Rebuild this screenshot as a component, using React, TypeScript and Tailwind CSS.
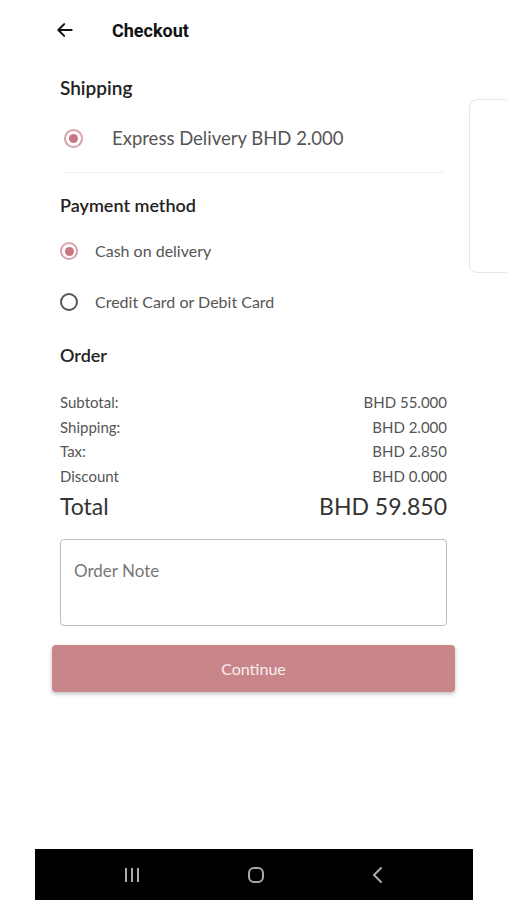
import React from "react";

const body = { fontFamily: "Lato, 'Open Sans', sans-serif" };

function Radio({ checked, size = 18 }: { checked: boolean; size?: number }) {
  return (
    <span
      className={`flex items-center justify-center rounded-full border-2 ${checked ? "border-[#d9a3ab]" : "border-[#555]"}`}
      style={{ width: size, height: size }}
    >
      {checked && <span className="block h-[9px] w-[9px] rounded-full bg-[#c97683]" />}
    </span>
  );
}

function Row({ label, value }: { label: string; value: string }) {
  return (
    <div className="flex h-[24.5px] items-center justify-between text-[15px] text-[#555]">
      <span>{label}</span>
      <span>{value}</span>
    </div>
  );
}

export default function App() {
  return (
    <div className="relative h-[900px] w-[507px] overflow-hidden bg-white" style={body}>
      {/* header */}
      <div className="flex h-[60px] items-center px-[55px]">
        <svg width="20" height="20" viewBox="0 0 24 24" fill="none" stroke="#111" strokeWidth="2.4" strokeLinecap="round" strokeLinejoin="round">
          <path d="M20 12H5M11 5l-7 7 7 7" />
        </svg>
        <span className="ml-[37px] text-[18px] font-bold text-[#111]" style={{ fontFamily: "Roboto, sans-serif" }}>
          Checkout
        </span>
      </div>

      {/* card peeking from the right */}
      <div className="absolute left-[469px] top-[99px] h-[174px] w-[60px] rounded-lg border border-[#e6e6e6] bg-white" />

      <div className="px-[60px]">
        <div className="mt-[14px] text-[19px] font-semibold text-[#222]">Shipping</div>
        <div className="mt-[22px] flex items-center pl-[4px]">
          <Radio checked size={19} />
          <span className="ml-[29px] text-[18.5px] text-[#555]">Express Delivery BHD 2.000</span>
        </div>
        <div className="mt-[20px] ml-[3px] mr-[3px] h-px bg-[#efefef]" />

        <div className="mt-[19px] text-[18px] font-semibold text-[#222]">Payment method</div>
        <div className="mt-[20px] flex items-center">
          <Radio checked />
          <span className="ml-[17px] text-[16px] text-[#555]">Cash on delivery</span>
        </div>
        <div className="mt-[27px] flex items-center">
          <Radio checked={false} />
          <span className="ml-[17px] text-[16px] text-[#555]">Credit Card or Debit Card</span>
        </div>

        <div className="mt-[28px] text-[18px] font-semibold text-[#222]">Order</div>
        <div className="mt-[21px]">
          <Row label="Subtotal:" value="BHD 55.000" />
          <Row label="Shipping:" value="BHD 2.000" />
          <Row label="Tax:" value="BHD 2.850" />
          <Row label="Discount" value="BHD 0.000" />
          <div className="flex h-[36px] items-center justify-between text-[23px] text-[#333]">
            <span>Total</span>
            <span>BHD 59.850</span>
          </div>
        </div>

        <div className="mt-[15px] h-[87px] rounded-[4px] border border-[#bdbdbd] px-[13px] pt-[18px] text-[17px] text-[#777]">
          Order Note
        </div>
      </div>

      <div className="mx-[52px] mt-[19px] flex h-[47px] items-center justify-center rounded-[4px] bg-[#c8858a] text-[16px] text-[#fbeeee] shadow-[0_2px_4px_rgba(0,0,0,0.25)]">
        Continue
      </div>

      {/* system nav bar */}
      <div className="absolute bottom-0 left-[35px] flex h-[51px] w-[438px] items-center justify-between bg-black px-[87px]">
        <svg width="20" height="18" viewBox="0 0 20 18" stroke="#aaa" strokeWidth="2">
          <path d="M4 2v14M10 2v14M16 2v14" />
        </svg>
        <svg width="20" height="20" viewBox="0 0 20 20" fill="none" stroke="#aaa" strokeWidth="2">
          <rect x="3" y="3" width="14" height="14" rx="5" />
        </svg>
        <svg width="16" height="18" viewBox="0 0 16 18" fill="none" stroke="#aaa" strokeWidth="2" strokeLinecap="round">
          <path d="M11 2L4 9l7 7" />
        </svg>
      </div>
    </div>
  );
}
